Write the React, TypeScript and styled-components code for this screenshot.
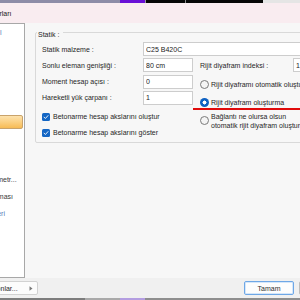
import React from "react";
import styled, { createGlobalStyle } from "styled-components";

const Global = createGlobalStyle`
  html, body { margin: 0; padding: 0; width: 300px; height: 300px; overflow: hidden; background: #f0f0f0; }
  body { font-family: "Liberation Sans", Arial, sans-serif; font-size: 7px; color: #1f1f1f; }
  #root { width: 300px; height: 300px; overflow: hidden; }
`;

const Screen = styled.div`
  width: 300px;
  height: 300px;
  display: flex;
  flex-direction: column;
  overflow: hidden;
`;

const Strip = styled.div<{ $h: number }>`
  display: flex;
  flex: none;
  height: ${(p) => p.$h}px;
`;

const StripSeg = styled.div<{ $w?: number; $c: string }>`
  background: ${(p) => p.$c};
  ${(p) => (p.$w ? `width:${p.$w}px; flex:none;` : `flex:1;`)}
`;

const Window = styled.div`
  flex: 1;
  min-height: 0;
  width: 420px;
  margin-left: -60px;
  display: flex;
  flex-direction: column;
`;

const TitleBar = styled.div`
  height: 20px;
  flex: none;
  background: #f9ecf0;
  display: flex;
  align-items: center;
  padding-left: 29.6px;
  color: #1a1a1a;
  white-space: nowrap;
`;

const Body = styled.div`
  flex: 1;
  min-height: 0;
  display: flex;
  background: #f7f7f7;
`;

const NavPanel = styled.div`
  width: 84px;
  flex: none;
  background: #ffffff;
  border: 1px solid #a8a8a8;
  border-left: none;
  display: flex;
  flex-direction: column;
  overflow: hidden;
`;

const NavItem = styled.div<{ $indent: number; $top?: number; $link?: boolean }>`
  height: 17px;
  flex: none;
  display: flex;
  align-items: center;
  margin-top: ${(p) => p.$top ?? 0}px;
  padding-left: ${(p) => p.$indent}px;
  white-space: nowrap;
  color: ${(p) => (p.$link ? "#4f7db8" : "#3a3a3a")};
`;

const NavSelected = styled.div<{ $top: number }>`
  height: 14px;
  flex: none;
  box-sizing: border-box;
  margin: ${(p) => p.$top}px 1px 0 0;
  border: 1px solid #c9a36b;
  border-radius: 2px;
  background: linear-gradient(#fde2ad 0%, #fbd287 45%, #f7bb55 100%);
  display: flex;
  align-items: center;
  padding-left: 36px;
  white-space: nowrap;
  overflow: hidden;
  color: #1a1a1a;
`;

const MainArea = styled.div`
  flex: 1;
  min-width: 0;
  padding: 9px 10px 0 10px;
`;

const GroupBox = styled.div`
  border: 1px solid #d9d9d9;
  border-radius: 2px;
  padding: 0 6px 2.5px 6px;
  display: flex;
  flex-direction: column;
`;

const GroupTitle = styled.div`
  align-self: flex-start;
  height: 9px;
  line-height: 9px;
  margin: -3px 0 0 -5px;
  padding: 0 4px 0 1px;
  background: #f7f7f7;
  color: #1f1f1f;
`;

const Row = styled.div<{ $top?: number }>`
  display: flex;
  align-items: center;
  height: 14px;
  flex: none;
  margin-top: ${(p) => p.$top ?? 2.3}px;
`;

const Label = styled.div<{ $w: number }>`
  width: ${(p) => p.$w}px;
  flex: none;
  white-space: nowrap;
  color: #1f1f1f;
`;

const Field = styled.input<{ $w?: number }>`
  box-sizing: border-box;
  height: 14px;
  ${(p) => (p.$w ? `width:${p.$w}px; flex:none;` : `flex:1; min-width:0;`)}
  border: 1px solid #cdcdcd;
  background: #ffffff;
  padding: 0 2px;
  margin: 0;
  font-family: "Liberation Sans", Arial, sans-serif;
  font-size: 7px;
  color: #1a1a1a;
  outline: none;
`;

const Columns = styled.div`
  display: flex;
  gap: 7px;
`;

const LeftCol = styled.div`
  width: 151px;
  flex: none;
  display: flex;
  flex-direction: column;
`;

const RightCol = styled.div`
  flex: 1;
  min-width: 0;
  display: flex;
  flex-direction: column;
`;

const CheckRow = styled.div<{ $top: number }>`
  display: flex;
  align-items: center;
  gap: 3px;
  height: 14px;
  margin-top: ${(p) => p.$top}px;
  white-space: nowrap;
`;

const CheckBox = styled.span`
  width: 8px;
  height: 8px;
  flex: none;
  border-radius: 1.5px;
  background: #1466c4;
  display: flex;
  align-items: center;
  justify-content: center;
`;

const RadioRow = styled.div<{ $top: number; $marked?: boolean }>`
  position: relative;
  display: flex;
  align-items: center;
  gap: 2px;
  min-height: 14px;
  margin-top: ${(p) => p.$top}px;
  ${(p) =>
    p.$marked
      ? `&::after { content: ""; position: absolute; left: -7px; right: -60px; bottom: -0.6px; height: 2px; background: #e00b0b; }`
      : ""}
`;

const Radio = styled.span<{ $on?: boolean }>`
  width: 9px;
  height: 9px;
  flex: none;
  box-sizing: border-box;
  border-radius: 50%;
  ${(p) =>
    p.$on
      ? `background: radial-gradient(circle, #ffffff 0 1.8px, #0f62c2 2.2px);`
      : `border: 1px solid #7a7a7a; background: #f4f4f4;`}
`;

const RadioText = styled.span`
  line-height: 9px;
  white-space: nowrap;
  color: #1f1f1f;
`;

const BottomBar = styled.div`
  height: 20px;
  flex: none;
  background: #f0f0f0;
  display: flex;
  align-items: center;
  padding: 0 11px 0 18px;
`;

const MenuButton = styled.div`
  box-sizing: border-box;
  width: 80px;
  height: 14px;
  border: 1px solid #d2d2d2;
  border-radius: 2px;
  background: #fcfcfc;
  display: flex;
  align-items: center;
  padding: 0 4px 0 23.6px;
  white-space: nowrap;
  color: #2a2a2a;
`;

const Arrow = styled.svg`
  margin-left: auto;
  flex: none;
`;

const DialogButton = styled.div<{ $primary?: boolean }>`
  box-sizing: border-box;
  width: 50px;
  height: 14px;
  border-radius: 2px;
  background: #fdfdfd;
  display: flex;
  align-items: center;
  justify-content: center;
  color: #2f2f2f;
  ${(p) =>
    p.$primary
      ? `margin-left: auto; border: 1px solid #6ea7e6; box-shadow: inset 0 0 0 1px #d5e7fa;`
      : `margin-left: 5px; border: 1px solid #bdbdbd;`}
`;

const Check = () => (
  <svg width="6" height="6" viewBox="0 0 6 6">
    <path d="M1 3.1 L2.4 4.5 L5 1.6" fill="none" stroke="#ffffff" strokeWidth="0.9" strokeLinecap="round" strokeLinejoin="round" />
  </svg>
);

export default function App() {
  return (
    <>
      <Global />
      <Screen>
        <Strip $h={3}>
          <StripSeg $w={120} $c="#8e8ca7" />
          <StripSeg $w={25} $c="#6a0fd6" />
          <StripSeg $w={1} $c="#9a9a9a" />
          <StripSeg $w={39} $c="#060606" />
          <StripSeg $w={1} $c="#8a8a8a" />
          <StripSeg $w={77} $c="#060606" />
          <StripSeg $c="#e5e5e5" />
        </Strip>
        <Window>
          <TitleBar>Proje Ayarları</TitleBar>
          <Body>
            <NavPanel>
              <NavItem $indent={42.8} $link>Genel</NavItem>
              <NavSelected $top={74}>Statik</NavSelected>
              <NavItem $indent={42.4} $top={41.5}>Parametr...</NavItem>
              <NavItem $indent={39.9}>Kaplaması</NavItem>
              <NavItem $indent={36.6} $link>Değerleri</NavItem>
            </NavPanel>
            <MainArea>
              <GroupBox>
                <GroupTitle>Statik :</GroupTitle>
                <Row $top={3}>
                  <Label $w={101}>Statik malzeme :</Label>
                  <Field readOnly value="C25 B420C" />
                </Row>
                <Columns>
                  <LeftCol>
                    <Row>
                      <Label $w={101}>Sonlu eleman genişliği :</Label>
                      <Field readOnly $w={50} value="80 cm" />
                    </Row>
                    <Row>
                      <Label $w={101}>Moment hesap açısı :</Label>
                      <Field readOnly $w={50} value="0" />
                    </Row>
                    <Row>
                      <Label $w={101}>Hareketli yük çarpanı :</Label>
                      <Field readOnly $w={50} value="1" />
                    </Row>
                    <CheckRow $top={5.1}>
                      <CheckBox><Check /></CheckBox>
                      Betonarme hesap akslarını oluştur
                    </CheckRow>
                    <CheckRow $top={2}>
                      <CheckBox><Check /></CheckBox>
                      Betonarme hesap akslarını göster
                    </CheckRow>
                  </LeftCol>
                  <RightCol>
                    <Row>
                      <Label $w={93}>Rijit diyafram indeksi :</Label>
                      <Field readOnly value="1" />
                    </Row>
                    <RadioRow $top={5.7}>
                      <Radio />
                      <RadioText>Rijit diyaframı otomatik oluştur</RadioText>
                    </RadioRow>
                    <RadioRow $top={3.7} $marked>
                      <Radio $on />
                      <RadioText>Rijit diyafram oluşturma</RadioText>
                    </RadioRow>
                    <RadioRow $top={2}>
                      <Radio />
                      <RadioText>
                        Bağlantı ne olursa olsun
                        <br />
                        otomatik rijit diyafram oluştur
                      </RadioText>
                    </RadioRow>
                  </RightCol>
                </Columns>
              </GroupBox>
            </MainArea>
          </Body>
          <BottomBar>
            <MenuButton>
              Şablonlar...
              <Arrow width="4" height="5" viewBox="0 0 4 5">
                <path d="M0.5 0.3 L3.5 2.5 L0.5 4.7 Z" fill="#7a7a7a" />
              </Arrow>
            </MenuButton>
            <DialogButton $primary>Tamam</DialogButton>
            <DialogButton>İptal</DialogButton>
          </BottomBar>
        </Window>
        <Strip $h={2}>
          <StripSeg $w={85} $c="#7d7d7d" />
          <StripSeg $w={35} $c="#a9a9a9" />
          <StripSeg $w={25} $c="#b39de0" />
          <StripSeg $c="#8e8e8e" />
        </Strip>
      </Screen>
    </>
  );
}
